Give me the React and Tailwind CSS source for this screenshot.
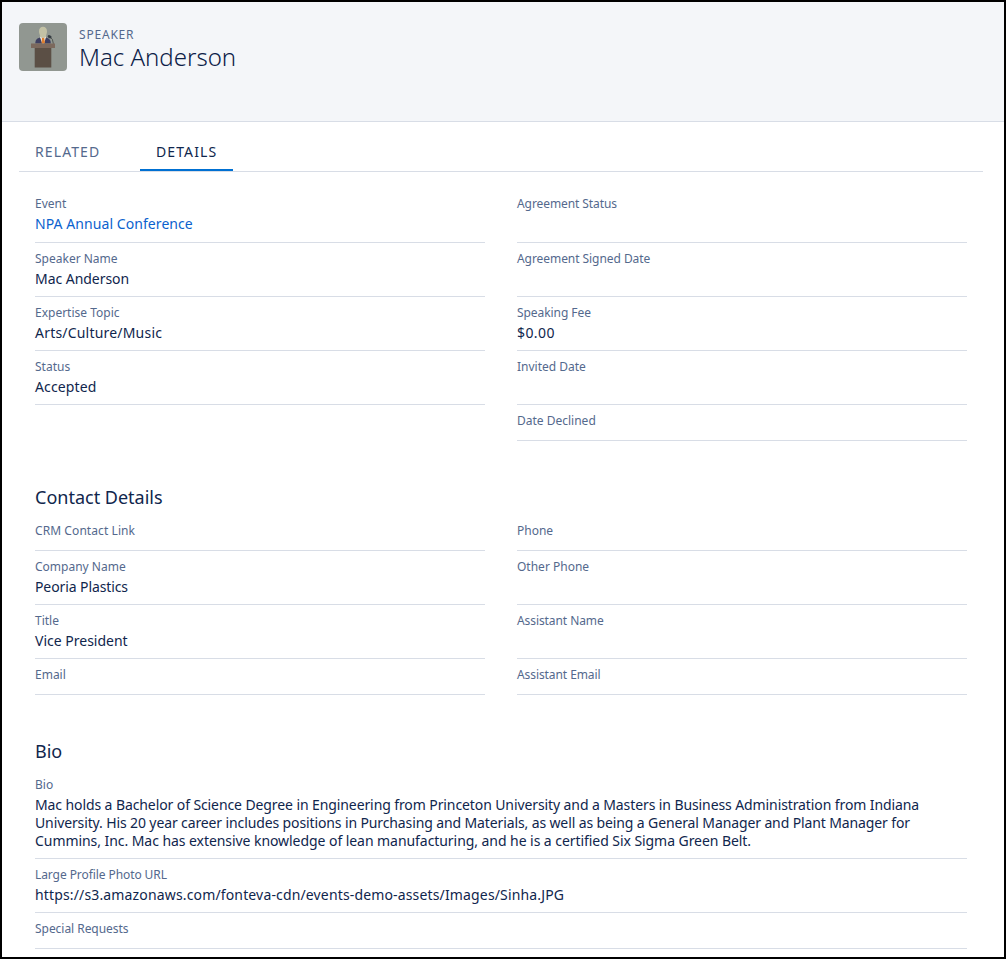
import React from "react";

function Field({ label, value, link, size = "h-[54px]", tracking = "tracking-normal", labelTracking = "tracking-normal" }) {
  return (
    <div className={`${size} border-b border-[#d8dde6] pt-[7px]`}>
      <div className={`h-[18px] whitespace-nowrap text-[12px] leading-[18px] text-[#54698d] ${labelTracking}`}>{label}</div>
      {value && (
        <div className={`mt-[2px] whitespace-pre text-[14px] leading-[18px] ${tracking} ${link ? "text-[#0b62ce]" : "text-[#10264d]"}`}>
          {value}
        </div>
      )}
    </div>
  );
}

function SectionTitle({ children }) {
  return <h2 className="h-[28px] text-[18px] leading-[28px] text-[#10264d]">{children}</h2>;
}

function SpeakerIcon() {
  return (
    <svg viewBox="0 0 48 48" className="h-12 w-12 shrink-0 rounded-[4px] bg-[#919791]">
      <path d="M16.300 20.500c0-4 1.700-5 4.700-6h6c3 1 4.800 2 4.800 6z" fill="#3e3f61" />
      <path d="M20.800 13.500l2.400 7h1.800l2.200-7z" fill="#f1eee8" />
      <path d="M23 14.500h2.200l.8 6h-3.400z" fill="#e0802f" />
      <path d="M20 8.200c0-3 1.600-4.500 4-4.500s4 1.500 4 4.500c0 2-.8 3.600-1 5l-1.200 1.600h-3.400L21.200 13.200c-.2-1.400-1.200-3-1.200-5z" fill="#c3c2a6" />
      <path d="M30.800 13.800q3.300 1.500 3.600 7" fill="none" stroke="#4b4e4b" strokeWidth=".9" />
      <ellipse cx="30.600" cy="13.700" rx="2.100" ry="1.500" transform="rotate(30 30.600 13.700)" fill="#353c42" />
      <path d="M12 20.500h24v4.500H12z" fill="#7c695d" />
      <path d="M15.700 25h16.600v19.500H15.700z" fill="#5b4f45" />
    </svg>
  );
}

export default function App() {
  return (
    <main className="h-[959px] w-[1006px] overflow-hidden border-2 border-black bg-white font-['Noto_Sans',sans-serif]">
      <header className="flex h-[120px] gap-3 border-b border-[#d8dde6] bg-[#f4f6f9] pt-[21px] pl-[17px]">
        <SpeakerIcon />
        <div className="pt-[4px]">
          <p className="text-[12px] leading-[16px] tracking-[0.8px] text-[#54698d]">SPEAKER</p>
          <h1 className="text-[24px] leading-[28px] font-light text-[#0c2148]">Mac Anderson</h1>
        </div>
      </header>

      <nav className="mr-[21px] ml-[17px] flex h-[50px] border-b border-[#d8dde6] text-[14px] leading-[20px] tracking-[1.1px]">
        <span className="w-[121px] pt-[20px] pl-4 text-[#54698d]">RELATED</span>
        <span className="w-[93px] border-b-2 border-[#0070d2] pt-[20px] pl-4 text-[#10264d]">DETAILS</span>
      </nav>

      <div className="mr-[37px] ml-[33px] pt-[16px]">
        <div className="grid grid-cols-2 gap-x-8">
          <div>
            <Field label="Event" value="NPA Annual Conference" link size="h-[55px]" tracking="tracking-[0.07px]" />
            <Field label="Speaker Name" value="Mac Anderson" tracking="tracking-[-0.04px]" />
            <Field label="Expertise Topic" value="Arts/Culture/Music" tracking="tracking-[0.2px]" />
            <Field label="Status" value="Accepted" tracking="tracking-[0.12px]" />
          </div>
          <div>
            <Field label="Agreement Status" size="h-[55px]" labelTracking="tracking-[-0.08px]" />
            <Field label="Agreement Signed Date" labelTracking="tracking-[-0.06px]" />
            <Field label="Speaking Fee" value="$0.00" tracking="tracking-[0.4px]" labelTracking="tracking-[-0.06px]" />
            <Field label="Invited Date" />
            <Field label="Date Declined" size="h-[36px]" />
          </div>
        </div>

        <section className="pt-[42px]">
          <SectionTitle>Contact Details</SectionTitle>
          <div className="mt-[4px] grid grid-cols-2 gap-x-8">
            <div>
              <Field label="CRM Contact Link" size="h-[36px]" labelTracking="tracking-[0.08px]" />
              <Field label="Company Name" value="Peoria Plastics" tracking="tracking-[-0.1px]" />
              <Field label="Title" value="Vice President" />
              <Field label="Email" size="h-[36px]" />
            </div>
            <div>
              <Field label="Phone" size="h-[36px]" />
              <Field label="Other Phone" />
              <Field label="Assistant Name" labelTracking="tracking-[-0.08px]" />
              <Field label="Assistant Email" size="h-[36px]" labelTracking="tracking-[-0.08px]" />
            </div>
          </div>
        </section>

        <section className="pt-[42px]">
          <SectionTitle>Bio</SectionTitle>
          <div className="mt-[4px]">
            <Field
              label="Bio"
              size="h-[90px]"
              value={
                <>
                  <span className="block tracking-[-0.098px]">Mac holds a Bachelor of Science Degree in Engineering from Princeton University and a Masters in Business Administration from Indiana</span>
                  <span className="block tracking-[-0.119px]">University. His 20 year career includes positions in Purchasing and Materials, as well as being a General Manager and Plant Manager for</span>
                  <span className="block tracking-[-0.06px]">Cummins, Inc. Mac has extensive knowledge of lean manufacturing, and he is a certified Six Sigma Green Belt.</span>
                </>
              }
            />
            <Field
              label="Large Profile Photo URL"
              value="https://s3.amazonaws.com/fonteva-cdn/events-demo-assets/Images/Sinha.JPG"
              tracking="tracking-[0.15px]"
              labelTracking="tracking-[-0.08px]"
            />
            <Field label="Special Requests" size="h-[36px]" labelTracking="tracking-[-0.04px]" />
          </div>
        </section>
      </div>
    </main>
  );
}
